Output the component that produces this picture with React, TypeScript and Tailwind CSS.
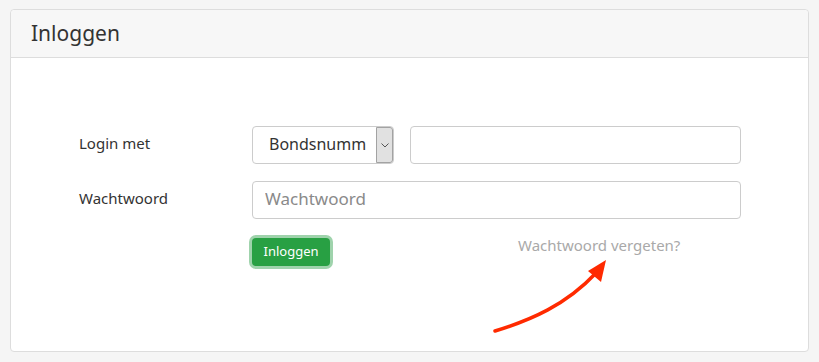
import React from "react"

const font = { fontFamily: '"Noto Sans", "Open Sans", sans-serif' }

function Arrow() {
  return (
    <svg
      className="absolute left-0 top-0 pointer-events-none"
      width="799"
      height="342"
      viewBox="0 0 799 342"
    >
      <path
        d="M484 321 C 520 310, 555 295, 585 263"
        fill="none"
        stroke="#ff2a00"
        strokeWidth="3.5"
        strokeLinecap="round"
      />
      <polygon points="595,250 577,261 590,272" fill="#ff2a00" />
    </svg>
  )
}

export default function App() {
  return (
    <div className="min-h-[362px] bg-[#f5f5f5] pt-[9px] px-[10px]" style={font}>
      <div className="relative bg-white border border-[#dddddd] rounded-[4px] h-[343px]">
        <div className="h-[48px] bg-[#f7f7f7] border-b border-[#dddddd] rounded-t-[4px] flex items-center px-[20px]">
          <h1 className="text-[21px] text-[#333333] leading-none pb-[1px]">Inloggen</h1>
        </div>

        <div className="pl-[68px] pt-[68px] pr-[67px]">
          <div className="flex items-center">
            <label className="w-[173px] text-[15px] text-[#333333] pb-[4px]">Login met</label>
            <div className="w-[142px] h-[38px] border border-[#cccccc] rounded-[4px] flex items-stretch bg-white">
              <span className="flex-1 flex items-center pl-[16px] pb-[2px] text-[16px] text-[#333333] overflow-hidden whitespace-nowrap">
                Bondsnumm
              </span>
              <span className="w-[17px] bg-[#e1e1e1] border border-[#a3a3a3] rounded-r-[3px] flex items-center justify-center">
                <svg width="8" height="5" viewBox="0 0 8 5">
                  <path d="M0.5 0.5 L4 4 L7.5 0.5" fill="none" stroke="#555" strokeWidth="1" />
                </svg>
              </span>
            </div>
            <input
              className="ml-[16px] flex-1 h-[38px] border border-[#cccccc] rounded-[4px] px-[12px] outline-none"
              type="text"
            />
          </div>

          <div className="flex items-center mt-[17px]">
            <label className="w-[173px] text-[15px] text-[#333333] pb-[4px]">Wachtwoord</label>
            <input
              className="flex-1 h-[38px] border border-[#cccccc] rounded-[4px] px-[12px] pb-[3px] text-[17px] placeholder:text-[#8a8a8a] outline-none"
              type="password"
              placeholder="Wachtwoord"
              style={font}
            />
          </div>

          <div className="flex items-start mt-[19px] pl-[173px]">
            <button
              className="h-[28px] w-[78px] pb-[1px] rounded-[4px] bg-[#28a043] text-white text-[13px] ring-[3px] ring-[#9fd3ac]"
              style={font}
            >
              Inloggen
            </button>
            <a className="ml-[188px] -mt-[4px] text-[15px] text-[#a9a9a9]">Wachtwoord vergeten?</a>
          </div>
        </div>

        <Arrow />
      </div>
    </div>
  )
}
